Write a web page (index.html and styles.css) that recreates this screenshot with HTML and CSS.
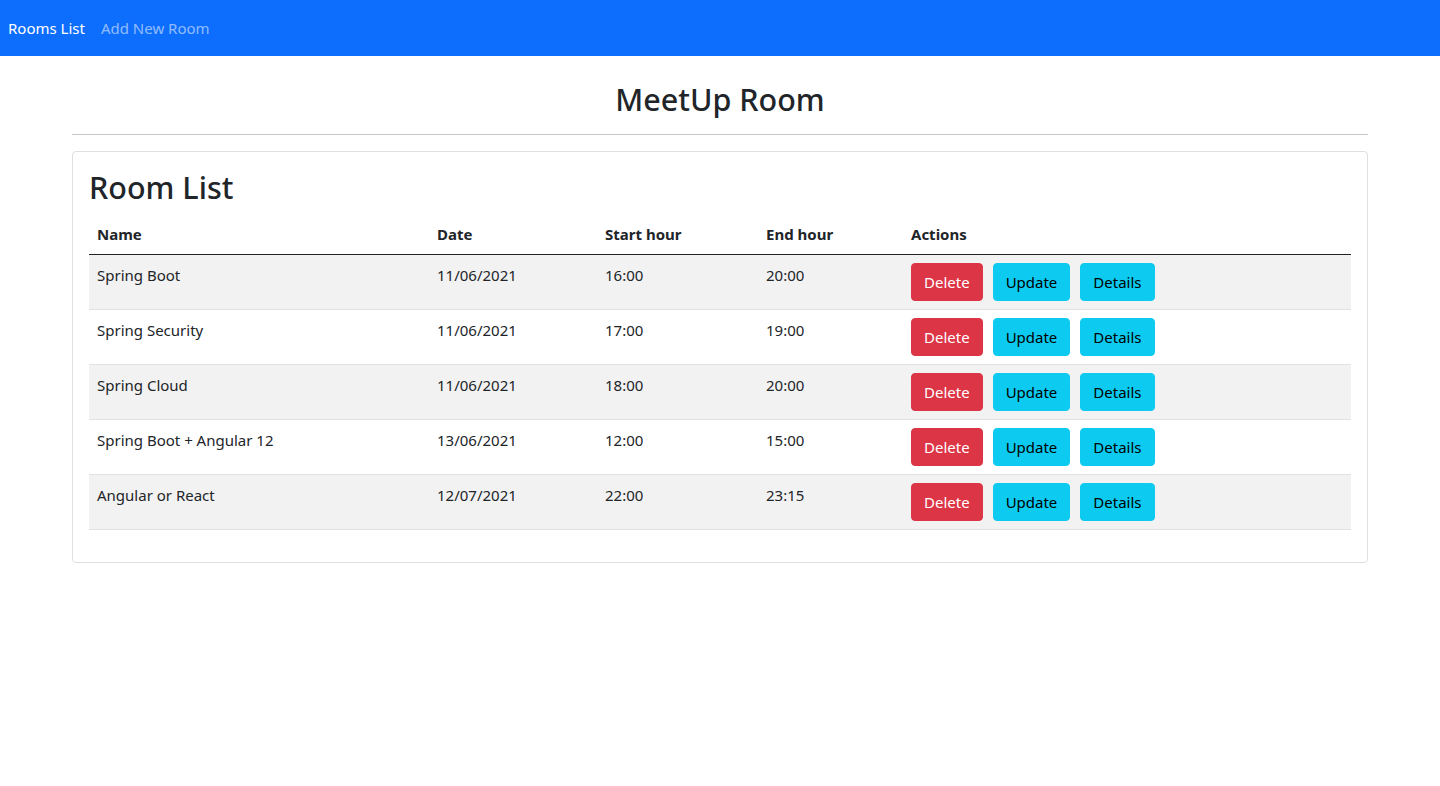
FILE: index.html
```html
<!DOCTYPE html>
<html lang="en">
<head>
<meta charset="utf-8">
<title>MeetUp Room</title>
<link rel="stylesheet" href="styles.css">
</head>
<body>
<nav class="navbar">
  <a class="nav-link active" href="#">Rooms List</a>
  <a class="nav-link" href="#">Add New Room</a>
</nav>
<main class="container">
  <h2 class="page-title">MeetUp Room</h2>
  <hr class="divider">
  <section class="card">
    <h2 class="card-title">Room List</h2>
    <table class="table">
      <thead>
        <tr>
          <th class="col-name">Name</th>
          <th class="col-date">Date</th>
          <th class="col-start">Start hour</th>
          <th class="col-end">End hour</th>
          <th>Actions</th>
        </tr>
      </thead>
      <tbody>
        <tr>
          <td>Spring Boot</td><td>11/06/2021</td><td>16:00</td><td>20:00</td>
          <td><div class="actions"><button class="btn btn-danger">Delete</button><button class="btn btn-info">Update</button><button class="btn btn-info">Details</button></div></td>
        </tr>
        <tr>
          <td>Spring Security</td><td>11/06/2021</td><td>17:00</td><td>19:00</td>
          <td><div class="actions"><button class="btn btn-danger">Delete</button><button class="btn btn-info">Update</button><button class="btn btn-info">Details</button></div></td>
        </tr>
        <tr>
          <td>Spring Cloud</td><td>11/06/2021</td><td>18:00</td><td>20:00</td>
          <td><div class="actions"><button class="btn btn-danger">Delete</button><button class="btn btn-info">Update</button><button class="btn btn-info">Details</button></div></td>
        </tr>
        <tr>
          <td>Spring Boot + Angular 12</td><td>13/06/2021</td><td>12:00</td><td>15:00</td>
          <td><div class="actions"><button class="btn btn-danger">Delete</button><button class="btn btn-info">Update</button><button class="btn btn-info">Details</button></div></td>
        </tr>
        <tr>
          <td>Angular or React</td><td>12/07/2021</td><td>22:00</td><td>23:15</td>
          <td><div class="actions"><button class="btn btn-danger">Delete</button><button class="btn btn-info">Update</button><button class="btn btn-info">Details</button></div></td>
        </tr>
      </tbody>
    </table>
  </section>
</main>
</body>
</html>
```

FILE: styles.css
```css
* { box-sizing: border-box; }
body {
  margin: 0;
  font-family: "Segoe UI", "Noto Sans", "Liberation Sans", sans-serif;
  font-size: 15px;
  line-height: 24px;
  color: #212529;
  background: #fff;
}
.navbar {
  display: flex;
  align-items: center;
  height: 56px;
  background: #0d6efd;
}
.nav-link {
  text-decoration: none;
  color: rgba(255,255,255,0.55);
  padding: 8px 8px;
}
.nav-link.active { color: #fff; }
.container {
  max-width: 1320px;
  margin: 0 auto;
  padding: 0 12px;
}
.page-title {
  margin: 24px 0 0;
  font-size: 30.5px;
  font-weight: 500;
  line-height: 38px;
  text-align: center;
}
.divider {
  margin: 16px 0;
  border: 0;
  border-top: 1px solid #c8c8c8;
  height: 0;
}
.card {
  border: 1px solid #dfdfdf;
  border-radius: 4px;
  padding: 16px 16px 32px;
}
.card-title {
  margin: 0 0 8px;
  font-size: 30.5px;
  font-weight: 500;
  line-height: 38px;
}
.table {
  width: 100%;
  border-collapse: collapse;
}
.table th, .table td {
  padding: 8px;
  text-align: left;
  vertical-align: top;
}
.table th {
  font-weight: 700;
  border-bottom: 1px solid #212529;
}
.table td { border-bottom: 1px solid #dee2e6; }
.table tbody tr:nth-child(odd) td { background: #f2f2f2; }
.col-name { width: 340px; }
.col-date { width: 168px; }
.col-start { width: 161px; }
.col-end { width: 145px; }
.actions { display: flex; gap: 10px; }
.btn {
  font: inherit;
  font-size: 15px;
  line-height: 24px;
  padding: 6px 12px;
  border: 1px solid transparent;
  border-radius: 4px;
  cursor: pointer;
}
.btn-danger { background: #dc3545; border-color: #dc3545; color: #fff; }
.btn-info { background: #0dcaf0; border-color: #0dcaf0; color: #000; }
```
